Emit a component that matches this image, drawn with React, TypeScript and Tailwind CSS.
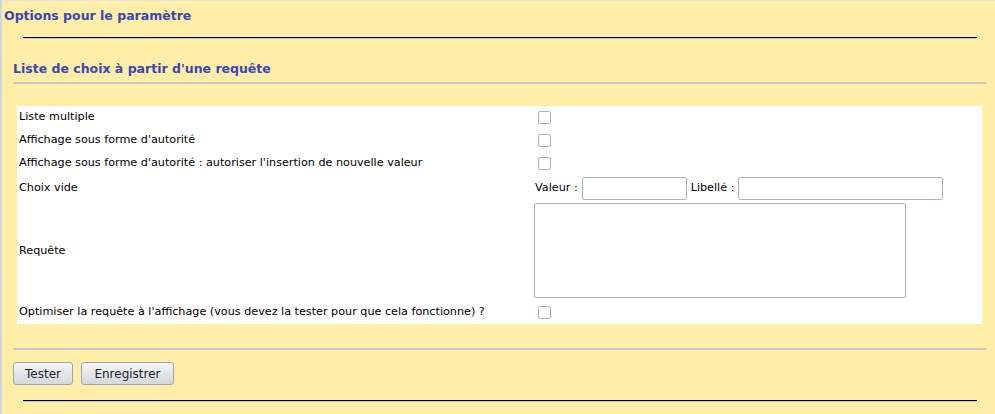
import React from "react";

const rows = [
  { label: "Liste multiple", kind: "check" },
  { label: "Affichage sous forme d'autorité", kind: "check" },
  { label: "Affichage sous forme d'autorité : autoriser l'insertion de nouvelle valeur", kind: "check" },
];

function Check() {
  return (
    <input
      type="checkbox"
      className="appearance-none ml-[4px] w-[13px] h-[13px] border border-[#a7b6c3] rounded-[2px] bg-white"
    />
  );
}

function Button({ label, w }: { label: string; w: string }) {
  return (
    <button
      className={`${w} h-[23px] rounded-[3px] border border-[#9ba7b2] bg-gradient-to-b from-[#f5f6f7] to-[#d3d8dd] text-[12px] text-[#222]`}
    >
      {label}
    </button>
  );
}

export default function App() {
  return (
    <div className="min-h-[414px] bg-[#ffeea8] border-l-2 border-t border-l-[#cdd6de] border-t-[#e4e4e4] font-['DejaVu_Sans',sans-serif] overflow-hidden">
      <h1 className="pl-[2px] pt-[5px] h-[21px] leading-[20px] text-[12.5px] font-bold text-[#3a46b6]">
        Options pour le paramètre
      </h1>
      <div className="mt-[15px] ml-[21px] mr-[18px] border-t border-t-black border-b border-b-[#c8c8c8]" />

      <div className="ml-[11px] mr-[8px]">
        <h2 className="mt-[20px] h-[20px] leading-[20px] text-[12.5px] font-bold text-[#3a46b6]">
          Liste de choix à partir d'une requête
        </h2>
        <div className="mt-[3px] h-[2px] bg-[#cccccc]" />

        <div className="mt-[22px] ml-[4px] mr-[5px] bg-white text-[11.2px] text-black">
          <div className="grid grid-cols-[517px_1fr]">
            {rows.map((r) => (
              <React.Fragment key={r.label}>
                <div className="h-[23px] flex items-center pl-[2px]">{r.label}</div>
                <div className="h-[23px] flex items-center">
                  <Check />
                </div>
              </React.Fragment>
            ))}

            <div className="h-[27px] flex items-center pl-[2px]">Choix vide</div>
            <div className="h-[27px] flex items-center">
              <span className="ml-[1px]">Valeur :</span>
              <input className="ml-[4px] w-[105px] h-[23px] border border-[#a7b6c3] rounded-[2px] bg-white" />
              <span className="ml-[4px]">Libellé :</span>
              <input className="ml-[4px] w-[205px] h-[23px] border border-[#a7b6c3] rounded-[2px] bg-white" />
            </div>

            <div className="h-[98px] flex items-center pl-[2px]">Requête</div>
            <div className="h-[98px] flex items-start pt-[1px]">
              <textarea className="w-[372px] h-[95px] border border-[#a7b6c3] rounded-[2px] resize-none bg-white" />
            </div>

            <div className="h-[24px] flex items-center pl-[2px]">
              Optimiser la requête à l'affichage (vous devez la tester pour que cela fonctionne) ?
            </div>
            <div className="h-[24px] flex items-center">
              <Check />
            </div>
          </div>
        </div>

        <div className="mt-[24px] h-[2px] bg-[#cccccc]" />
        <div className="mt-[12px] flex gap-[8px]">
          <Button label="Tester" w="w-[60px]" />
          <Button label="Enregistrer" w="w-[93px]" />
        </div>
      </div>

      <div className="mt-[15px] ml-[21px] mr-[18px] border-t border-t-black border-b border-b-[#c8c8c8]" />
    </div>
  );
}
